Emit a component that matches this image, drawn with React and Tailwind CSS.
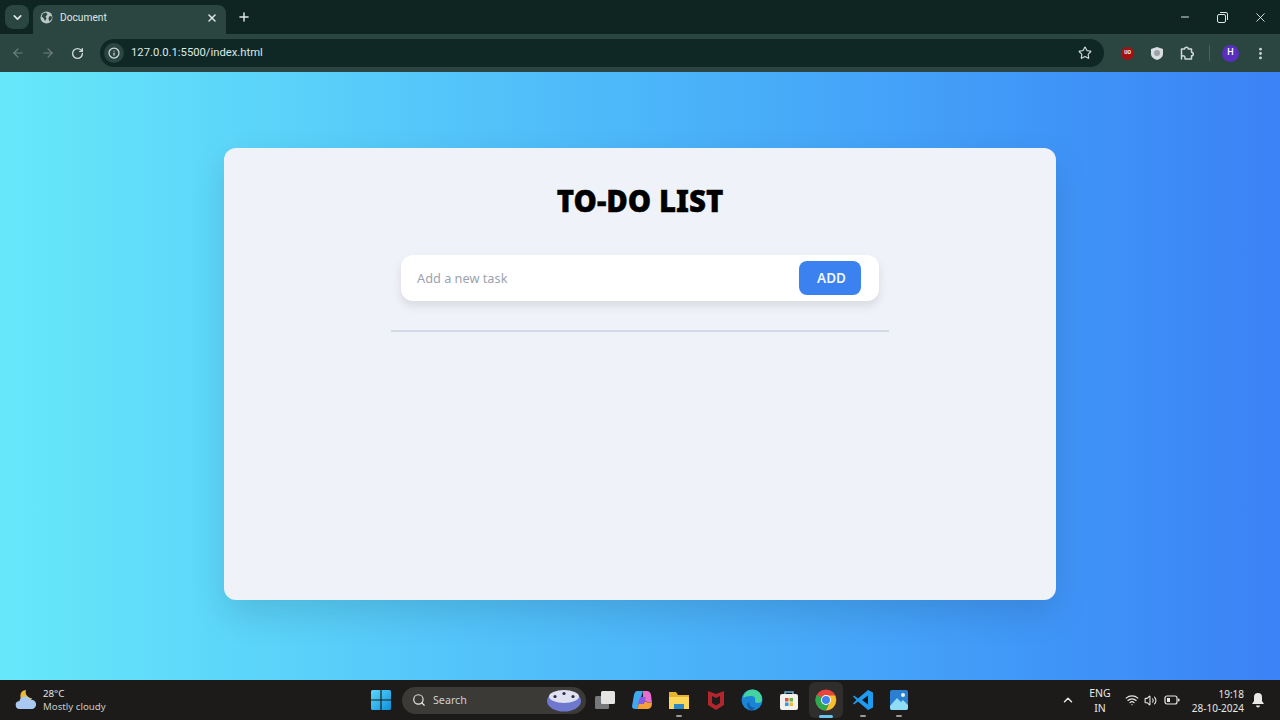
import { ArrowLeft, ArrowRight, RotateCw, Info, Star, X, Plus, ChevronDown, Minus, Search, ChevronUp, MoreVertical, Wifi, Volume2 } from "lucide-react";

function WindowsLogo() {
  return (
    <svg width="22" height="22" viewBox="0 0 22 22">
      <defs>
        <linearGradient id="win" x1="0" y1="0" x2="1" y2="1">
          <stop offset="0" stopColor="#5fd8fb" />
          <stop offset="1" stopColor="#0b8fdc" />
        </linearGradient>
      </defs>
      <path d="M1 2.500 Q1 1 2.500 1H10.400V10.400H1ZM11.600 1H19.500Q21 1 21 2.500V10.400H11.600ZM1 11.600H10.400V21H2.500Q1 21 1 19.500ZM11.600 11.600H21V19.500Q21 21 19.500 21H11.600Z" fill="url(#win)" />
    </svg>
  );
}

function Weather() {
  return (
    <svg width="24" height="24" viewBox="0 0 24 24">
      <path d="M12 2a6 6 0 1 0 6 8 6 6 0 0 1-6-8Z" fill="#e8b93c" />
      <path d="M6 21a4 4 0 0 1-.6-8 6 6 0 0 1 11.200-1.200A4.700 4.700 0 0 1 18.500 21Z" fill="#a9c9f2" />
    </svg>
  );
}

function SearchArt() {
  return (
    <svg width="36" height="24" viewBox="0 0 36 24">
      <ellipse cx="18" cy="13" rx="17" ry="10.500" fill="#6f78cf" />
      <ellipse cx="18" cy="8.500" rx="15" ry="6.500" fill="#dfe0f0" />
      <circle cx="9" cy="8.500" r="1.600" fill="#2b2b4a" />
      <circle cx="18" cy="5.500" r="1.600" fill="#2b2b4a" />
      <circle cx="27" cy="8.500" r="1.600" fill="#2b2b4a" />
    </svg>
  );
}

function TaskView() {
  return (
    <svg width="22" height="22" viewBox="0 0 22 22">
      <rect x="1" y="7" width="14" height="13" rx="1.500" fill="#77787a" />
      <rect x="7" y="2" width="14" height="13" rx="1.500" fill="#e4e4e4" />
    </svg>
  );
}

function Copilot() {
  return (
    <svg width="22" height="22" viewBox="0 0 22 22">
      <path d="M6 2h6l-3 10-3 8H4Q1 20 1 17L3 6Q4 2 6 2Z" fill="#3fa8ee" />
      <path d="M12 2h4q3 0 4 4l1 8-9-2Z" fill="#e86fd0" />
      <path d="M9 12l12 2q0 6-5 6H6Z" fill="#f4a13c" />
      <path d="M9 8h6l-2 7H7Z" fill="#8a5ce6" />
    </svg>
  );
}

function Folder() {
  return (
    <svg width="24" height="22" viewBox="0 0 24 22">
      <path d="M2 3h7l2 3h11v14H2Z" fill="#e8b22e" />
      <path d="M2 8h20v12H2Z" fill="#fbd75c" />
      <rect x="7" y="15" width="10" height="5" fill="#2f87c8" />
    </svg>
  );
}

function Mcafee() {
  return (
    <svg width="20" height="22" viewBox="0 0 20 22">
      <path d="M2 2l8 3 8-3v14l-8 5-8-5Z" fill="#b3262b" />
      <path d="M6 7l4 2 4-2v7l-4 2.500L6 14Z" fill="#1c1c1c" />
    </svg>
  );
}

function Edge() {
  return (
    <svg width="22" height="22" viewBox="0 0 22 22">
      <circle cx="11" cy="11" r="10.500" fill="#1a84d6" />
      <path d="M2 9a9.500 9.500 0 0 1 19 2q0 3-4 3-3 0-3-2 1-5-4-5-5 0-8 2Z" fill="#43d2a0" />
      <path d="M8 13q0 5 6 6l-3 2.500Q7 21 6 15Z" fill="#0f5fa8" />
    </svg>
  );
}

function Store() {
  return (
    <svg width="22" height="22" viewBox="0 0 22 22">
      <path d="M7 6V3h8v3" fill="none" stroke="#6ab7d8" strokeWidth="1.500" />
      <rect x="2" y="5" width="18" height="16" rx="2" fill="#f1f1ee" />
      <rect x="7" y="9" width="3.500" height="3.500" fill="#e0533c" />
      <rect x="11.500" y="9" width="3.500" height="3.500" fill="#6cb33f" />
      <rect x="7" y="13.500" width="3.500" height="3.500" fill="#2f9be0" />
      <rect x="11.500" y="13.500" width="3.500" height="3.500" fill="#f5b82e" />
    </svg>
  );
}

function Chrome() {
  return (
    <svg width="22" height="22" viewBox="0 0 22 22">
      <circle cx="11" cy="11" r="10.500" fill="#e8453c" />
      <path d="M11 11 1.900 5.700A10.500 10.500 0 0 0 11 21.500l5-10.500Z" fill="#2fa84f" />
      <path d="M11 6.500h9a10.500 10.500 0 0 1-9 15L16 11Z" fill="#f6c029" />
      <circle cx="11" cy="11" r="5" fill="#fff" />
      <circle cx="11" cy="11" r="4" fill="#3f83ee" />
    </svg>
  );
}

function VsCode() {
  return (
    <svg width="22" height="22" viewBox="0 0 22 22">
      <path d="M16 1l5 2.500v15L16 21 6 12.500 2 15.500 1 14.500 4.500 11 1 7.500l1-1 4 3Z" fill="#1f9cf0" />
      <path d="M16 6.500 10 11l6 4.500Z" fill="#0d1a22" />
    </svg>
  );
}

function Photos() {
  return (
    <svg width="20" height="22" viewBox="0 0 20 22">
      <rect x="1" y="1" width="18" height="20" rx="2" fill="#2b7fd0" />
      <path d="M1 17l7-8 4 4 2-2 5 5v3a2 2 0 0 1-2 2H3a2 2 0 0 1-2-2Z" fill="#8fdcf5" />
      <circle cx="14" cy="6" r="2" fill="#e6f6ff" />
    </svg>
  );
}

function Battery() {
  return (
    <svg width="16" height="12" viewBox="0 0 16 12">
      <rect x="1" y="2" width="12" height="8" rx="2" fill="none" stroke="#e8e8e8" strokeWidth="1.200" />
      <rect x="3" y="4" width="3" height="4" fill="#e8e8e8" />
      <rect x="14" y="4.500" width="1.500" height="3" rx="0.700" fill="#e8e8e8" />
    </svg>
  );
}

function Bell() {
  return (
    <svg width="14" height="16" viewBox="0 0 14 16">
      <path d="M7 1a4 4 0 0 0-4 4v4L1 12h12l-2-3V5a4 4 0 0 0-4-4Z" fill="#e8e8e8" />
      <path d="M5 13.500a2 2 0 0 0 4 0Z" fill="#e8e8e8" />
    </svg>
  );
}

function TabGlobe() {
  return (
    <svg width="13" height="13" viewBox="0 0 13 13">
      <circle cx="6.500" cy="6.500" r="6" fill="#b9c7c4" />
      <path d="M3 2.500 6 1.500 7.500 3.500 5.500 5.500 6.500 7.500 5 10 3.500 7 1.500 5.500ZM9 5.500 11.500 5 12 7.500 9.500 10.500 8.500 8Z" fill="#2b4540" />
    </svg>
  );
}

function ExtensionIcon() {
  return (
    <svg width="16" height="16" viewBox="0 0 16 16" fill="none" stroke="currentColor" strokeWidth="1.500" strokeLinejoin="round">
      <path d="M2.500 4h3.200a1.800 1.800 0 0 1 3.600 0h3.200v3.200a1.800 1.800 0 0 1 0 3.600v3.200H6v-1.500a1.700 1.700 0 0 0-3.500 0V14H2.500Z" />
    </svg>
  );
}

function BrowserChrome() {
  return (
    <div className="shrink-0 font-['Roboto',sans-serif]">
      <div className="flex h-[34px] bg-[#0e2522] text-[#dfe8e6]">
        <div className="ml-[5px] mt-[5px] flex h-[24px] w-[24px] items-center justify-center rounded-lg bg-[#2b4540]">
          <ChevronDown size={13} strokeWidth={3} />
        </div>
        <div className="ml-[4px] mt-[5px] flex h-[29px] w-[193px] items-center rounded-t-lg bg-[#2b4540] pb-[4px] pl-[7px] pr-[8px]">
          <TabGlobe />
          <span className="ml-[7px] flex-1 text-[10.200px] text-[#dfe8e6]">Document</span>
          <X size={12} strokeWidth={3} />
        </div>
        <div className="ml-[11px] flex items-center">
          <Plus size={14} strokeWidth={2.500} />
        </div>
        <div className="ml-auto flex items-center">
          <div className="flex w-[37px] justify-center"><Minus size={12} /></div>
          <div className="flex w-[38px] justify-center">
            <svg width="11" height="11" viewBox="0 0 11 11" fill="none" stroke="currentColor">
              <rect x="0.500" y="2.500" width="8" height="8" rx="1.500" />
              <path d="M3 .5h6a1.500 1.500 0 0 1 1.500 1.500v6" />
            </svg>
          </div>
          <div className="flex w-[39px] justify-center"><X size={15} strokeWidth={1.500} /></div>
        </div>
      </div>
      <div className="flex h-[38px] items-center bg-[#2b4540] text-[#cfdad8]">
        <div className="ml-[11px] flex w-[79px] items-center gap-[16px]">
          <ArrowLeft size={14} className="text-[#6f8380]" />
          <ArrowRight size={14} className="text-[#6f8380]" />
          <RotateCw size={13} strokeWidth={2.500} />
        </div>
        <div className="ml-[10px] flex h-[28px] w-[1004px] items-center rounded-full bg-[#0f2825] pl-[4px] pr-[12px]">
          <div className="flex h-[20px] w-[20px] items-center justify-center rounded-full bg-[#2b4540]">
            <Info size={12} strokeWidth={2.500} />
          </div>
          <span className="ml-[7px] flex-1 text-[11.250px] text-[#dfe8e6]">127.0.0.1:5500/index.html</span>
          <Star size={14} strokeWidth={2} />
        </div>
        <div className="ml-[17px] flex h-[13px] w-[13px] items-center justify-center rounded-full bg-[#a31212] text-[5px] font-bold text-white">
          UO
        </div>
        <svg width="14" height="15" viewBox="0 0 14 15" className="ml-[16px]">
          <path d="M7 1l6 2v5q0 4-6 6-6-2-6-6V3Z" fill="#d8dde0" />
          <circle cx="7" cy="7" r="3" fill="#9aa3aa" />
        </svg>
        <div className="ml-[15px]"><ExtensionIcon /></div>
        <div className="ml-[14px] h-[16px] w-px bg-[#4a625e]" />
        <div className="ml-[12px] flex h-[17px] w-[17px] items-center justify-center rounded-full bg-[#5a2fc0] text-[9px] font-medium text-white">
          H
        </div>
        <MoreVertical size={15} strokeWidth={2.500} className="ml-[14px]" />
      </div>
    </div>
  );
}

function TodoCard() {
  return (
    <div className="mx-auto flex h-[452px] w-[832px] flex-col items-center rounded-xl bg-[#eff3f9] pt-[33px] shadow-[0_14px_36px_rgba(0,0,0,0.12)]">
      <h1 className="h-[40px] font-['Noto_Sans',sans-serif] text-[29.400px] leading-[40px] font-black text-black [-webkit-text-stroke:0.4px_black]">TO-DO LIST</h1>
      <div className="mt-[34px] flex h-[46px] w-[478px] items-center justify-between rounded-xl bg-white pr-[18px] pl-[16px] shadow-[0_5px_10px_rgba(0,0,0,0.1)]">
        <span className="pt-px font-['Noto_Sans',sans-serif] text-[12.750px] text-[#9ca3af]">Add a new task</span>
        <button className="h-[34px] w-[62px] rounded-lg bg-[#3b82f0] pl-[3px] font-['Noto_Sans',sans-serif] text-[13.500px] font-semibold text-[#f2f6ff]">
          ADD
        </button>
      </div>
      <div className="mt-[29px] h-[2px] w-[498px] bg-[#d3d9e6]" />
    </div>
  );
}

function Taskbar() {
  return (
    <div className="flex h-[40px] shrink-0 items-center bg-[#1c1b19] font-['Noto_Sans',sans-serif] text-[#e8e8e8]">
      <div className="ml-[14px] flex w-[356px] items-center">
        <Weather />
        <div className="ml-[5px] text-[9.700px] leading-[13px]">
          <div>28°C</div>
          <div className="text-[#c9c9c9]">Mostly cloudy</div>
        </div>
      </div>
      <div className="-mt-px flex w-[22px] items-center justify-center"><WindowsLogo /></div>
      <div className="ml-[10px] flex h-[27px] w-[184px] items-center rounded-full bg-[#3b3a37] pl-[10px] pr-[4px]">
        <Search size={14} strokeWidth={2} />
        <span className="ml-[7px] flex-1 text-[10.700px] text-[#cfcfcf]">Search</span>
        <SearchArt />
      </div>
      <div className="ml-px flex items-center">
        <div className="flex w-[36.750px] justify-center"><TaskView /></div>
        <div className="flex w-[36.750px] justify-center"><Copilot /></div>
        <div className="relative flex w-[36.750px] justify-center">
          <Folder />
          <div className="absolute -bottom-[6px] h-[2px] w-[6px] rounded-full bg-[#9a9a9a]" />
        </div>
        <div className="flex w-[36.750px] justify-center"><Mcafee /></div>
        <div className="flex w-[36.750px] justify-center"><Edge /></div>
        <div className="flex w-[36.750px] justify-center"><Store /></div>
        <div className="flex w-[36.750px] justify-center">
          <div className="relative flex h-[36px] w-[34px] items-center justify-center rounded-md bg-[#2f2e2c]">
            <Chrome />
            <div className="absolute bottom-0 h-[3px] w-[14px] rounded-full bg-[#6cc5ee]" />
          </div>
        </div>
        <div className="relative flex w-[36.750px] justify-center">
          <VsCode />
          <div className="absolute -bottom-[6px] h-[2px] w-[6px] rounded-full bg-[#9a9a9a]" />
        </div>
        <div className="relative flex w-[36.750px] justify-center">
          <Photos />
          <div className="absolute -bottom-[6px] h-[2px] w-[6px] rounded-full bg-[#9a9a9a]" />
        </div>
      </div>
      <div className="ml-auto flex items-center">
        <ChevronUp size={14} strokeWidth={2.500} />
        <div className="ml-[13px] mt-px w-[24px] text-center text-[10.500px] leading-[15px]">
          <div>ENG</div>
          <div>IN</div>
        </div>
        <Wifi size={14} className="ml-[13px]" />
        <Volume2 size={13} className="ml-[5px]" />
        <div className="ml-[7px]"><Battery /></div>
        <div className="ml-[9px] mt-px w-[55px] text-right text-[10px] leading-[14px]">
          <div>19:18</div>
          <div>28-10-2024</div>
        </div>
        <div className="mr-[15px] ml-[7px]"><Bell /></div>
      </div>
    </div>
  );
}

export default function App() {
  return (
    <div className="flex h-[720px] w-[1280px] flex-col overflow-hidden">
      <BrowserChrome />
      <div className="flex-1 bg-gradient-to-r from-[#67e8f9] to-[#3b82f6] pt-[76px]">
        <TodoCard />
      </div>
      <Taskbar />
    </div>
  );
}
